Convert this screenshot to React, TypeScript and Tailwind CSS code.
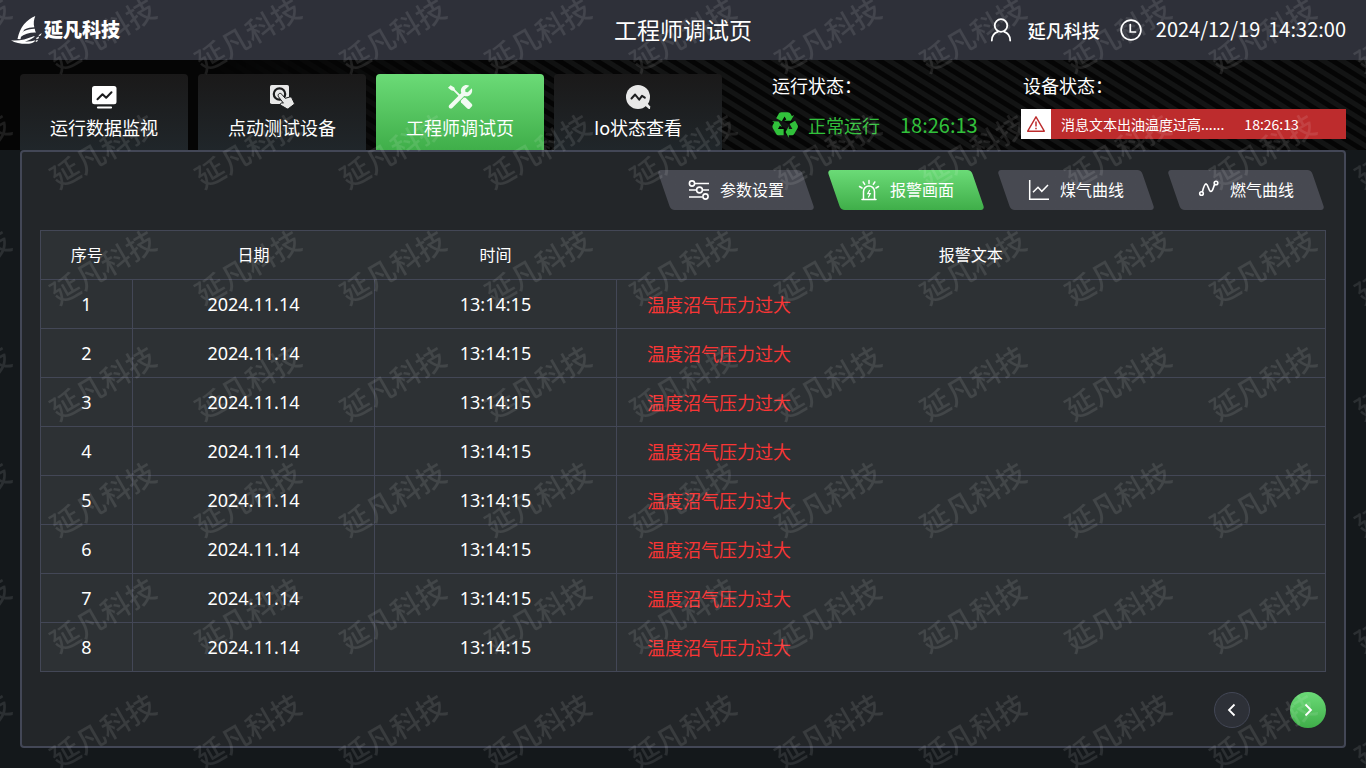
import type { ReactNode } from "react";

const cjk = "font-['Noto_Sans_CJK_SC',sans-serif]";
const digits = "font-['Noto_Sans','Noto_Sans_CJK_SC',sans-serif]";

function Logo() {
  return (
    <svg width="32" height="30" viewBox="0 0 32 30" fill="#fff" aria-hidden="true">
      <path d="M24.300 1C15.500 4.500 9 12 6.500 24l3 .3C10 20 11.500 17 13.500 14.500c3-1.300 6.500-2.200 9.800-2.200C22.300 8.500 22.800 4.500 24.300 1Z" />
      <path d="M9 22.500c.5-2.500 1.600-4.600 3.500-6.200 3.500-1.700 7.500-2.600 11.300-2.500.2 1.700.6 2.700 1.200 3.800-6.200-.2-11.700 1.400-16 4.900Z" />
      <path d="M0 25.200c8 .8 15-1 22-3.800 1.200-.4 2.200-.1 1.300.6-3 2.200-6 3.500-9.300 4.400 3.500.3 7-.2 10.500-1.200-1 1.800-3 3.200-6.500 3.500C12 29 4.500 28.500 0 25.200Z" />
      <path d="m25.500 22.800 2.600-1.200-.6 1.800-2.400.9ZM28 20l2.600-2-.7 2.300-2.400 1ZM25 25.500l2-.8-.8 1.900-1.600.3Z" />
    </svg>
  );
}

function UserIcon() {
  return (
    <svg width="22" height="24" viewBox="0 0 22 24" fill="none" stroke="#fff" strokeWidth="1.800" strokeLinecap="round" aria-hidden="true">
      <circle cx="11" cy="7.500" r="6.300" />
      <path d="M1.800 22.500c0-4.800 2.800-7.700 6.200-8.900M20.200 22.500c0-4.800-2.800-7.700-6.200-8.900" />
    </svg>
  );
}

function ClockIcon() {
  return (
    <svg width="22" height="22" viewBox="0 0 22 22" fill="none" stroke="#fff" strokeWidth="1.700" strokeLinecap="round" aria-hidden="true">
      <circle cx="11" cy="11" r="9.900" />
      <path d="M10.300 5.500V13h5.200" />
    </svg>
  );
}

function MonitorIcon() {
  return (
    <svg width="26" height="26" viewBox="0 0 26 26" aria-hidden="true">
      <rect x="1" y="2" width="24.500" height="18.300" rx="2.500" fill="#fff" />
      <path d="m6.500 15.200 5-5 3.700 3.600L20.500 8.300" fill="none" stroke="#1b1c1d" strokeWidth="2" strokeLinecap="round" strokeLinejoin="round" />
      <path d="M7 23.500h13" stroke="#fff" strokeWidth="2.200" strokeLinecap="round" />
    </svg>
  );
}

function TouchIcon() {
  return (
    <svg width="26" height="26" viewBox="0 0 26 26" aria-hidden="true">
      <rect x="1" y="1" width="19" height="19" rx="1.800" fill="#e8e8e8" />
      <circle cx="10.500" cy="10" r="5.700" fill="none" stroke="#1b1c1d" strokeWidth="2.200" />
      <path
        d="M9.500 10.200c1.200-1.400 2.600-.8 3.300.1l3.400 4 4.300-1.200c1.300-.3 2 .2 2.500 1.200l2.200 4.600c.3.700.2 1.200-.4 1.700l-5.300 4c-.6.400-1.100.4-1.700.1l-5.500-3.200c-1.700-1.100-.9-2.800.8-2.600l1.300.2-4.700-6.100c-.7-.9-.8-2 -.2-2.800Z"
        fill="#e8e8e8"
        stroke="#1b1c1d"
        strokeWidth="1"
      />
    </svg>
  );
}

function ToolsIcon() {
  return (
    <svg width="26" height="26" viewBox="0 0 26 26" fill="#f1fbf2" aria-hidden="true">
      <path d="M1 3.800 3.600 1.300l3.700 2.200.8 2.200 6 6-1.400 1.400-6-6-2.600-.8Z" />
      <path d="M13.700 16.700l3.200-3.200 1.700.3 6 5.900c.9.900.9 2 .1 2.900l-1.800 1.800c-.9.800-2 .8-2.900-.1l-5.900-5.900Z" />
      <path d="M22.300 1.800 18.200 5.600l.3 2.400 2.300.3 4-4c1.100 3.200-.3 6.200-2.900 7.500-1.600.7-3.200.7-4.700.1L5.300 24c-.9.800-2.100.8-3 0-.8-.9-.8-2 0-2.900L14.300 9c-.9-2.300-.4-4.600 1.200-6.200 1.800-1.800 4.400-2.200 6.800-1Z" />
    </svg>
  );
}

function IoIcon() {
  return (
    <svg width="26" height="26" viewBox="0 0 26 26" aria-hidden="true">
      <circle cx="13" cy="13" r="12" fill="#e8e8e8" />
      <path d="M20 21.500 24 25h1l.2-2.500-2.600-3Z" fill="#e8e8e8" />
      <path d="m6.500 14.500 3.600-4 4.100 5.200 2.800-3.800 2.800 1.800" fill="none" stroke="#1d1e20" strokeWidth="2" strokeLinecap="round" strokeLinejoin="round" />
    </svg>
  );
}

function RecycleIcon() {
  return (
    <svg width="26" height="26" viewBox="1.900 2.800 20.300 20.300" fill="currentColor" aria-hidden="true">
      <path d="M21.820 15.420 19.320 19.750C18.830 20.610 17.920 21.060 17 21H15V23L12.500 18.500 15 14V16H17.820L15.600 12.150 19.930 9.650 21.730 12.770C22.250 13.540 22.320 14.570 21.820 15.420M9.210 3.060H14.210C15.190 3.060 16.040 3.630 16.450 4.450L17.450 6.190 19.180 5.190 16.540 9.600 11.390 9.690 13.120 8.690 11.710 6.240 9.500 10.090 5.160 7.590 6.960 4.470C7.370 3.640 8.220 3.060 9.210 3.060M5.050 19.760 2.550 15.430C2.060 14.580 2.130 13.560 2.640 12.790L3.640 11.060 1.910 10.060 7.050 10.140 9.700 14.560 7.970 13.560 6.560 16H11V21H7.400C6.470 21.070 5.550 20.610 5.050 19.760Z" />
    </svg>
  );
}

function WarningIcon() {
  return (
    <svg width="20" height="18" viewBox="0 0 20 18" fill="none" stroke="#bd2c2d" aria-hidden="true">
      <path d="M10 1.800 18.300 16.200H1.700Z" strokeWidth="1.400" strokeLinejoin="round" />
      <path d="M10 6.500v5M10 12.800v1.400" strokeWidth="1.500" />
    </svg>
  );
}

function SlidersIcon() {
  return (
    <svg width="22" height="22" viewBox="0 0 22 22" fill="none" stroke="#fff" strokeWidth="1.600" aria-hidden="true">
      <path d="M6.500 4.500H21M1 11h7M14.500 11H21M1 18h13.500" />
      <circle cx="4" cy="4.500" r="2.600" />
      <circle cx="11.500" cy="11" r="2.900" />
      <circle cx="17.500" cy="17.500" r="2.600" />
    </svg>
  );
}

function AlarmIcon() {
  return (
    <svg width="22" height="22" viewBox="0 0 22 22" fill="none" stroke="#fff" strokeWidth="1.500" strokeLinecap="round" aria-hidden="true">
      <path d="M5.500 20v-7.500a5.500 5.500 0 0 1 11 0V20M4 20.500h14" />
      <path d="M11 1.500v3M5.200 3l1.500 2.400M16.800 3l-1.500 2.400M1.500 7.500 4 9M20.500 7.500 18 9" />
      <path d="m11.500 11.500-1.700 3.200h2.400L10.500 18" strokeWidth="1.300" />
    </svg>
  );
}

function AxisChartIcon() {
  return (
    <svg width="22" height="22" viewBox="0 0 22 22" fill="none" stroke="#fff" strokeWidth="1.500" aria-hidden="true">
      <path d="M1.700 1v19.300H21" />
      <path d="m5 13.300 5-5 3.800 4L20 6" />
    </svg>
  );
}

function CurveIcon() {
  return (
    <svg width="22" height="22" viewBox="0 0 22 22" fill="none" stroke="#fff" strokeWidth="1.600" strokeLinecap="round" aria-hidden="true">
      <circle cx="3.500" cy="14.500" r="1.800" />
      <circle cx="18" cy="4" r="1.800" />
      <path d="M4.400 12.800C5.600 8 6.600 4.600 8.200 4.900c2.200.6 2.300 7.400 4.700 7.600 2.100 0 2.300-4.500 3.800-7" />
    </svg>
  );
}

function Arrow({ d }: { d: string }) {
  return (
    <svg width="16" height="16" viewBox="0 0 16 16" fill="none" stroke="#fff" strokeWidth="1.800" aria-hidden="true">
      <path d={d} />
    </svg>
  );
}

const mainTabs: { label: string; icon: ReactNode; active?: boolean }[] = [
  { label: "运行数据监视", icon: <MonitorIcon /> },
  { label: "点动测试设备", icon: <TouchIcon /> },
  { label: "工程师调试页", icon: <ToolsIcon />, active: true },
  { label: "Io状态查看", icon: <IoIcon /> },
];

const subTabs: { label: string; icon: ReactNode; active?: boolean }[] = [
  { label: "参数设置", icon: <SlidersIcon /> },
  { label: "报警画面", icon: <AlarmIcon />, active: true },
  { label: "煤气曲线", icon: <AxisChartIcon /> },
  { label: "燃气曲线", icon: <CurveIcon /> },
];

const alarms = Array.from({ length: 8 }, (_, i) => ({
  id: i + 1,
  date: "2024.11.14",
  time: "13:14:15",
  text: "温度沼气压力过大",
}));

function Header() {
  return (
    <header className="grid h-[60px] grid-cols-[1fr_auto_1fr] items-center bg-[#2e3039]">
      <div className="flex items-center gap-px pl-[11px]">
        <Logo />
        <span className="pb-0.5 text-[19px] leading-6 font-black">延凡科技</span>
      </div>
      <h1 className="pb-0.5 text-[23px] leading-8">工程师调试页</h1>
      <div className="flex items-center justify-end pr-5 leading-6">
        <UserIcon />
        <span className="mr-5 ml-4 text-lg leading-6 font-medium">延凡科技</span>
        <ClockIcon />
        <time className="ml-[14px] pb-0.5 text-[20px] leading-6">2024/12/19</time>
        <time className="ml-2 pb-0.5 text-[20px] leading-6">14:32:00</time>
      </div>
    </header>
  );
}

function StatusBar() {
  return (
    <div className="relative flex h-[90px] items-start bg-[#050505] px-5 pt-[14px]">
      <div className="absolute inset-0 bg-[repeating-linear-gradient(32deg,#050505_0px,#050505_4px,#131414_5px,#131414_9px,#050505_10px)] mask-[linear-gradient(90deg,transparent_15%,black_45%)]" />
      <nav className="relative flex gap-[10px]">
        {mainTabs.map((t) => (
          <button
            key={t.label}
            type="button"
            className={`flex h-[76px] w-[168px] flex-col items-center rounded-t bg-linear-to-b pt-[10px] text-lg leading-7 ${
              t.active ? "from-[#6bdb77] to-[#3fae49]" : "from-[#1a1919] to-[#20262a]"
            }`}
          >
            {t.icon}
            <span className="mt-[3px]">{t.label}</span>
          </button>
        ))}
      </nav>
      <section className="relative ml-[50px] w-[249px]">
        <h2 className="text-lg leading-[22px]">运行状态：</h2>
        <div className="mt-[14px] flex h-[30px] items-center text-[#31c13b]">
          <RecycleIcon />
          <span className="ml-[10px] text-lg">正常运行</span>
          <time className="ml-5 text-xl">18:26:13</time>
        </div>
      </section>
      <section className="relative flex-1">
        <h2 className="pl-0.5 text-lg leading-[22px]">设备状态：</h2>
        <div className="mt-[13px] flex h-[30px] items-center bg-[#bd2c2d] text-sm">
          <span className="flex size-[30px] items-center justify-center bg-white">
            <WarningIcon />
          </span>
          <span className="ml-[10px]">消息文本出油温度过高......</span>
          <time className="ml-5">18:26:13</time>
        </div>
      </section>
    </div>
  );
}

function SubTabs() {
  return (
    <nav className="flex justify-end gap-[26px] pr-2">
      {subTabs.map((t) => (
        <button
          key={t.label}
          type="button"
          className={`relative isolate flex h-10 w-[144px] items-center justify-center gap-[10px] text-base before:absolute before:inset-0 before:-z-10 before:skew-x-[19deg] before:rounded before:bg-linear-to-b ${
            t.active ? "before:from-[#6bdb77] before:to-[#3fae49]" : "before:from-[#474951] before:to-[#474951]"
          }`}
        >
          {t.icon}
          <span className="pb-0.5">{t.label}</span>
        </button>
      ))}
    </nav>
  );
}

function AlarmTable() {
  return (
    <table className="mt-5 w-full table-fixed border-collapse border border-[#434756] bg-[#2d3134] text-center">
      <colgroup>
        <col className="w-[92px]" />
        <col className="w-[242px]" />
        <col className="w-[242px]" />
        <col />
      </colgroup>
      <thead>
        <tr className="h-[49px] text-base">
          <th className="pb-0.5 font-normal">序号</th>
          <th className="pb-0.5 font-normal">日期</th>
          <th className="pb-0.5 font-normal">时间</th>
          <th className="pb-0.5 font-normal">报警文本</th>
        </tr>
      </thead>
      <tbody className="text-lg">
        {alarms.map((a) => (
          <tr key={a.id} className="h-[49px]">
            <td className={`border border-[#434756] ${digits}`}>{a.id}</td>
            <td className={`border border-[#434756] ${digits}`}>{a.date}</td>
            <td className={`border border-[#434756] ${digits}`}>{a.time}</td>
            <td className="border border-[#434756] pl-[30px] text-left text-[#f93535]">{a.text}</td>
          </tr>
        ))}
      </tbody>
    </table>
  );
}

function Watermark() {
  return (
    <div className="pointer-events-none fixed inset-0 overflow-hidden" aria-hidden="true">
      <div className="-mt-6 -ml-[115px] grid auto-rows-[116px] grid-cols-[repeat(11,145px)]">
        {Array.from({ length: 77 }, (_, i) => (
          <span key={i} className="flex -rotate-30 items-center justify-center text-[29px] font-medium whitespace-nowrap text-white/10">
            延凡科技
          </span>
        ))}
      </div>
    </div>
  );
}

export default function App() {
  return (
    <div className={`flex min-h-screen flex-col bg-[#14181b] text-white ${cjk}`}>
      <Header />
      <StatusBar />
      <main className="mx-5 mb-5 flex flex-1 flex-col rounded border-2 border-[#434756] bg-[#232629] p-[18px]">
        <SubTabs />
        <AlarmTable />
        <div className="mt-5 flex justify-end gap-10">
          <button type="button" aria-label="上一页" className="flex size-9 items-center justify-center rounded-full border border-[#434756] bg-[#2d3037]">
            <Arrow d="m10.500 2.500-5.500 5.500 5.500 5.500" />
          </button>
          <button type="button" aria-label="下一页" className="flex size-9 items-center justify-center rounded-full bg-linear-to-b from-[#6bdb77] to-[#3fae49]">
            <Arrow d="m5.500 2.500 5.500 5.500-5.500 5.500" />
          </button>
        </div>
      </main>
      <Watermark />
    </div>
  );
}
